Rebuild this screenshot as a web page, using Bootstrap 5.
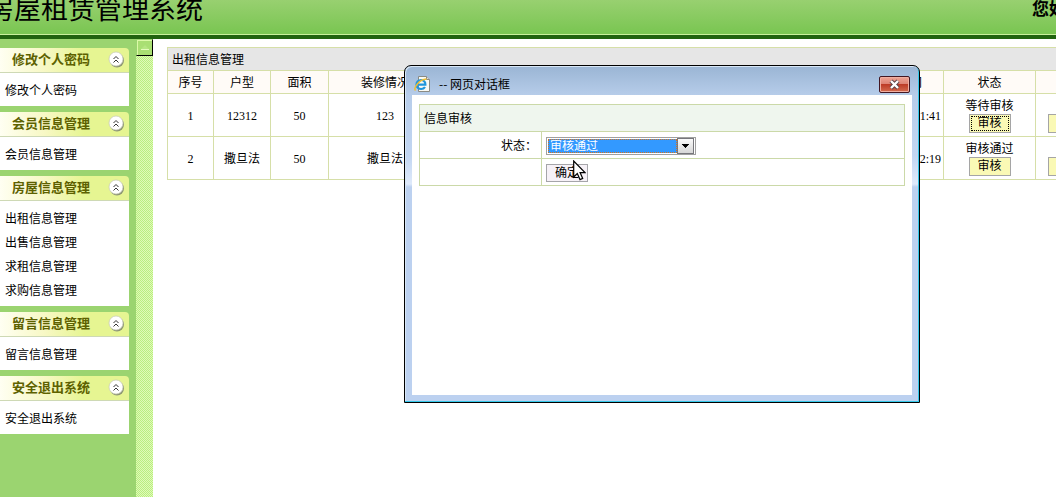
<!DOCTYPE html>
<html lang="zh-CN">
<head>
<meta charset="utf-8">
<meta name="viewport" content="width=device-width, initial-scale=1">
<title>房屋租赁管理系统</title>
<link href="https://cdn.jsdelivr.net/npm/bootstrap@5.3.0/dist/css/bootstrap.min.css" rel="stylesheet">
<style>
  body { font: 12px/16px "Liberation Serif", "Noto Sans CJK SC", serif; color: #000; background: #fff; }
  button, select { font: inherit; color: #000; border-radius: 0; }
  .topbar { height: 39px; background: linear-gradient(#98d070, #7bc653 32px); border-bottom: 4px solid #21630f; box-shadow: inset 0 -1px #c9f09c; }
  .brand { font-size: 27px; line-height: 20px; font-weight: 400; margin-left: -13px; }
  .greet { font-size: 17px; line-height: 20px; font-weight: 700; margin-right: -10px; }
  .side { width: 136px; background: #9bd470; padding: 9px 7px 0 0; }
  .menu-head { height: 25px; border: 0; border-bottom: 1px solid #ced9b5; border-radius: 0 4px 0 0; padding: 0 4px 1px 12px; background: linear-gradient(90deg, #fffff2, #f7f8c4 35%, #e6f592 65%, #e6f592); color: #5d6100; font-size: 13px; font-weight: 700; }
  .menu-body { padding: 6px 5px 3px; background: #fff; margin-bottom: 6px; }
  .menu-body a { display: block; line-height: 24px; color: #000; text-decoration: none; }
  .splitter { width: 17px; background: repeating-conic-gradient(#b9ee80 0 25%, #e0fab9 0 50%) 0 0 / 2px 2px; }
  .scroll-up { width: 17px; height: 17px; padding: 0; border: 1px solid #9bd470; border-right-color: #000; border-bottom-color: #000; background: #a9df73; box-shadow: inset 1px 1px #dcfaa8; }
  .content { padding: 8px 0 0 14px; }
  .grid { table-layout: fixed; border-collapse: collapse; }
  .grid th, .grid td { border: 1px solid #d6dfa8; text-align: center; padding: 1px 0 0; font-weight: 400; white-space: nowrap; }
  .listing { width: calc(100% + 72px); }
  .listing caption { caption-side: top; background: #e6e6e6; color: #000; border: 1px solid #d6dfa8; border-bottom: 0; padding: 4px 4px 3px; height: 23px; }
  .listing th { height: 23px; background: #fffbf7; }
  .listing td { height: 43px; }
  .listing .stamp { text-align: right; padding-right: 2px; }
  .listing .stamp-head { text-align: right; padding-right: 21px; }
  .listing .cut { text-align: left; padding: 19px 0 0 12px; }
  .w-a { width: 46px; } .w-b { width: 57px; } .w-c { width: 58px; } .w-d { width: 113px; } .w-e { width: 92px; }
  .audit { display: inline-block; width: 42px; height: 19px; padding: 0; line-height: 17px; background: #faf9b5; border: 1px solid #a5a5a5; }
  .audit.current { outline: 1px dotted #000; outline-offset: -3px; }
  .dialog-box { position: absolute; left: 404px; top: 65px; width: 516px; border: 1px solid #000; border-radius: 7px 7px 0 0; padding: 0 7px 7px; background: linear-gradient(#9ab5d4, #b7cdea 30px, #c2d6f2 90px, #dfeafb 118px, #bcd1f0 121px); box-shadow: inset -1px -1px #35c8ea, inset 1px 1px #d8e7f6; }
  .title-row { height: 29px; padding: 6px 2px 0 2px; font-family: "Noto Sans CJK SC", sans-serif; }
  .close-btn { width: 31px; height: 17px; padding: 0; border: 1px solid #431722; border-radius: 2px; background: linear-gradient(#efa596, #dc8172 48%, #bd3c27 50%, #d46c50); box-shadow: inset 0 0 0 1px #f0afa2; }
  .pane { min-height: 300px; background: #fff; padding: 9px 7px; }
  .form-grid th, .form-grid td { border-color: #cbd9a8; height: 27px; }
  .form-grid .form-title { background: #eff6ee; text-align: left; padding-left: 4px; }
  .form-grid .form-label { width: 122px; text-align: right; padding-right: 4px; }
  .form-grid .form-field { text-align: left; padding-left: 4px; }
  .pick { width: 150px; height: 18px; border: 1px solid #a0a0a0; padding: 1px; background: #fff; }
  .pick select { appearance: none; width: 130px; height: 14px; line-height: 12px; padding: 0 1px; border: 1px dotted #d8741c; background: #3399ff; color: #fff; outline: 0; }
  .drop { width: 17px; height: 16px; border: 1px solid #77777c; background: linear-gradient(#fafafa, #d7d7d7); pointer-events: none; }
  .ok-btn { display: block; width: 42px; height: 18px; padding: 0; line-height: 16px; background: #f6f1f7; border: 1px solid #a5a5a9; }
  .pointer { position: absolute; left: 573px; top: 160px; }
</style>
</head>
<body class="min-vh-100 d-flex flex-column overflow-hidden position-relative">
<header class="topbar d-flex justify-content-between overflow-hidden flex-shrink-0">
  <h1 class="brand mb-0">房屋租赁管理系统</h1>
  <span class="greet">您好</span>
</header>

<svg class="d-none">
  <symbol id="fold" viewBox="0 0 17 17">
    <circle cx="9" cy="9.500" r="7" fill="#8d9675"/><circle cx="8" cy="8" r="7" fill="#fff" stroke="#c5c9b5" stroke-width=".7"/>
    <path d="M5.500 8 8 5.500l2.500 2.500M5.500 11.500 8 9l2.500 2.500" fill="none" stroke="#333" stroke-width="1"/>
  </symbol>
</svg>

<div class="d-flex flex-grow-1">
  <nav class="side flex-shrink-0">
    <button class="menu-head w-100 d-flex justify-content-between align-items-center">修改个人密码<svg width="17" height="17"><use href="#fold"/></svg></button>
    <div class="menu-body"><a href="#">修改个人密码</a></div>
    <button class="menu-head w-100 d-flex justify-content-between align-items-center">会员信息管理<svg width="17" height="17"><use href="#fold"/></svg></button>
    <div class="menu-body"><a href="#">会员信息管理</a></div>
    <button class="menu-head w-100 d-flex justify-content-between align-items-center">房屋信息管理<svg width="17" height="17"><use href="#fold"/></svg></button>
    <div class="menu-body"><a href="#">出租信息管理</a><a href="#">出售信息管理</a><a href="#">求租信息管理</a><a href="#">求购信息管理</a></div>
    <button class="menu-head w-100 d-flex justify-content-between align-items-center">留言信息管理<svg width="17" height="17"><use href="#fold"/></svg></button>
    <div class="menu-body"><a href="#">留言信息管理</a></div>
    <button class="menu-head w-100 d-flex justify-content-between align-items-center">安全退出系统<svg width="17" height="17"><use href="#fold"/></svg></button>
    <div class="menu-body"><a href="#">安全退出系统</a></div>
  </nav>
  <div class="splitter flex-shrink-0">
    <button class="scroll-up d-block" aria-label="向上滚动"><svg class="d-block" width="15" height="15" viewBox="0 0 15 15"><path d="M4 9 8 5l4 4z" fill="#b4e681"/><path d="M4 9.500h8" stroke="#e4fcbc"/></svg></button>
  </div>
  <main class="content flex-grow-1 overflow-hidden">
    <table class="grid listing">
      <caption>出租信息管理</caption>
      <colgroup><col class="w-a"><col class="w-b"><col class="w-c"><col class="w-d"><col><col class="w-e"><col class="w-e"><col class="w-e"></colgroup>
      <thead>
        <tr><th>序号</th><th>户型</th><th>面积</th><th>装修情况</th><th></th><th class="stamp-head">时间</th><th>状态</th><th></th></tr>
      </thead>
      <tbody>
        <tr><td>1</td><td>12312</td><td>50</td><td>123</td><td></td><td class="stamp">1:41</td><td>等待审核<br><button class="audit current">审核</button></td><td class="cut"><button class="audit" aria-label="操作"></button></td></tr>
        <tr><td>2</td><td>撒旦法</td><td>50</td><td>撒旦法</td><td></td><td class="stamp">2:19</td><td>审核通过<br><button class="audit">审核</button></td><td class="cut"><button class="audit" aria-label="操作"></button></td></tr>
      </tbody>
    </table>
  </main>
</div>

<section class="dialog-box" role="dialog" aria-labelledby="dlgTitle">
  <div class="title-row d-flex justify-content-between">
    <div class="d-flex align-items-center">
      <svg width="17" height="18" viewBox="0 0 17 18" class="me-2">
        <path d="M4.500 1.500h8l3 3v12h-11z" fill="#fafaf4" stroke="#8b8b84"/><path d="M12.500 1.500v3h3" fill="#ddd" stroke="#8b8b84"/>
        <path d="M11 12c-1 1.600-2.300 2-3.800 2-2.700 0-4.700-1.900-4.700-4.400S4.500 5 7 5s4.500 1.800 4.400 4.600H4" fill="none" stroke="#2196dc" stroke-width="2.200"/>
        <path d="M1.500 15.500C-.8 13 5 4.500 12.500 4" fill="none" stroke="#f0bd32" stroke-width="1.500"/>
      </svg>
      <span id="dlgTitle">-- 网页对话框</span>
    </div>
    <button class="close-btn mt-1" aria-label="关闭"><svg class="d-block mx-auto" width="13" height="11" viewBox="0 0 13 11"><path d="m3 2 7 7M10 2 3 9" stroke="#5b4146" stroke-width="4.200"/><path d="m3 2 7 7M10 2 3 9" stroke="#fff" stroke-width="2.400"/></svg></button>
  </div>
  <form class="pane">
    <table class="grid form-grid w-100">
      <colgroup><col class="form-label"><col></colgroup>
      <tr><th class="form-title" colspan="2">信息审核</th></tr>
      <tr>
        <td class="form-label"><label for="state">状态：</label></td>
        <td class="form-field"><div class="pick d-flex justify-content-between align-items-center">
          <select id="state"><option>审核通过</option></select>
          <svg class="drop" viewBox="0 0 15 14"><path d="M4 5h7v1h-1v1H9v1H8v1H7V8H6V7H5V6H4z" fill="#000"/></svg>
        </div></td>
      </tr>
      <tr><td></td><td class="form-field"><button type="button" class="ok-btn">确定</button></td></tr>
    </table>
  </form>
</section>
<svg class="pointer" width="13" height="21" viewBox="0 0 13 21"><path d="M.7 1v16l3.600-3.400 2.700 6 2.700-1.200-2.600-5.800H12z" fill="#fff" stroke="#000" stroke-width="1.200"/></svg>
<script src="https://cdn.jsdelivr.net/npm/bootstrap@5.3.0/dist/js/bootstrap.bundle.min.js"></script>
</body>
</html>
